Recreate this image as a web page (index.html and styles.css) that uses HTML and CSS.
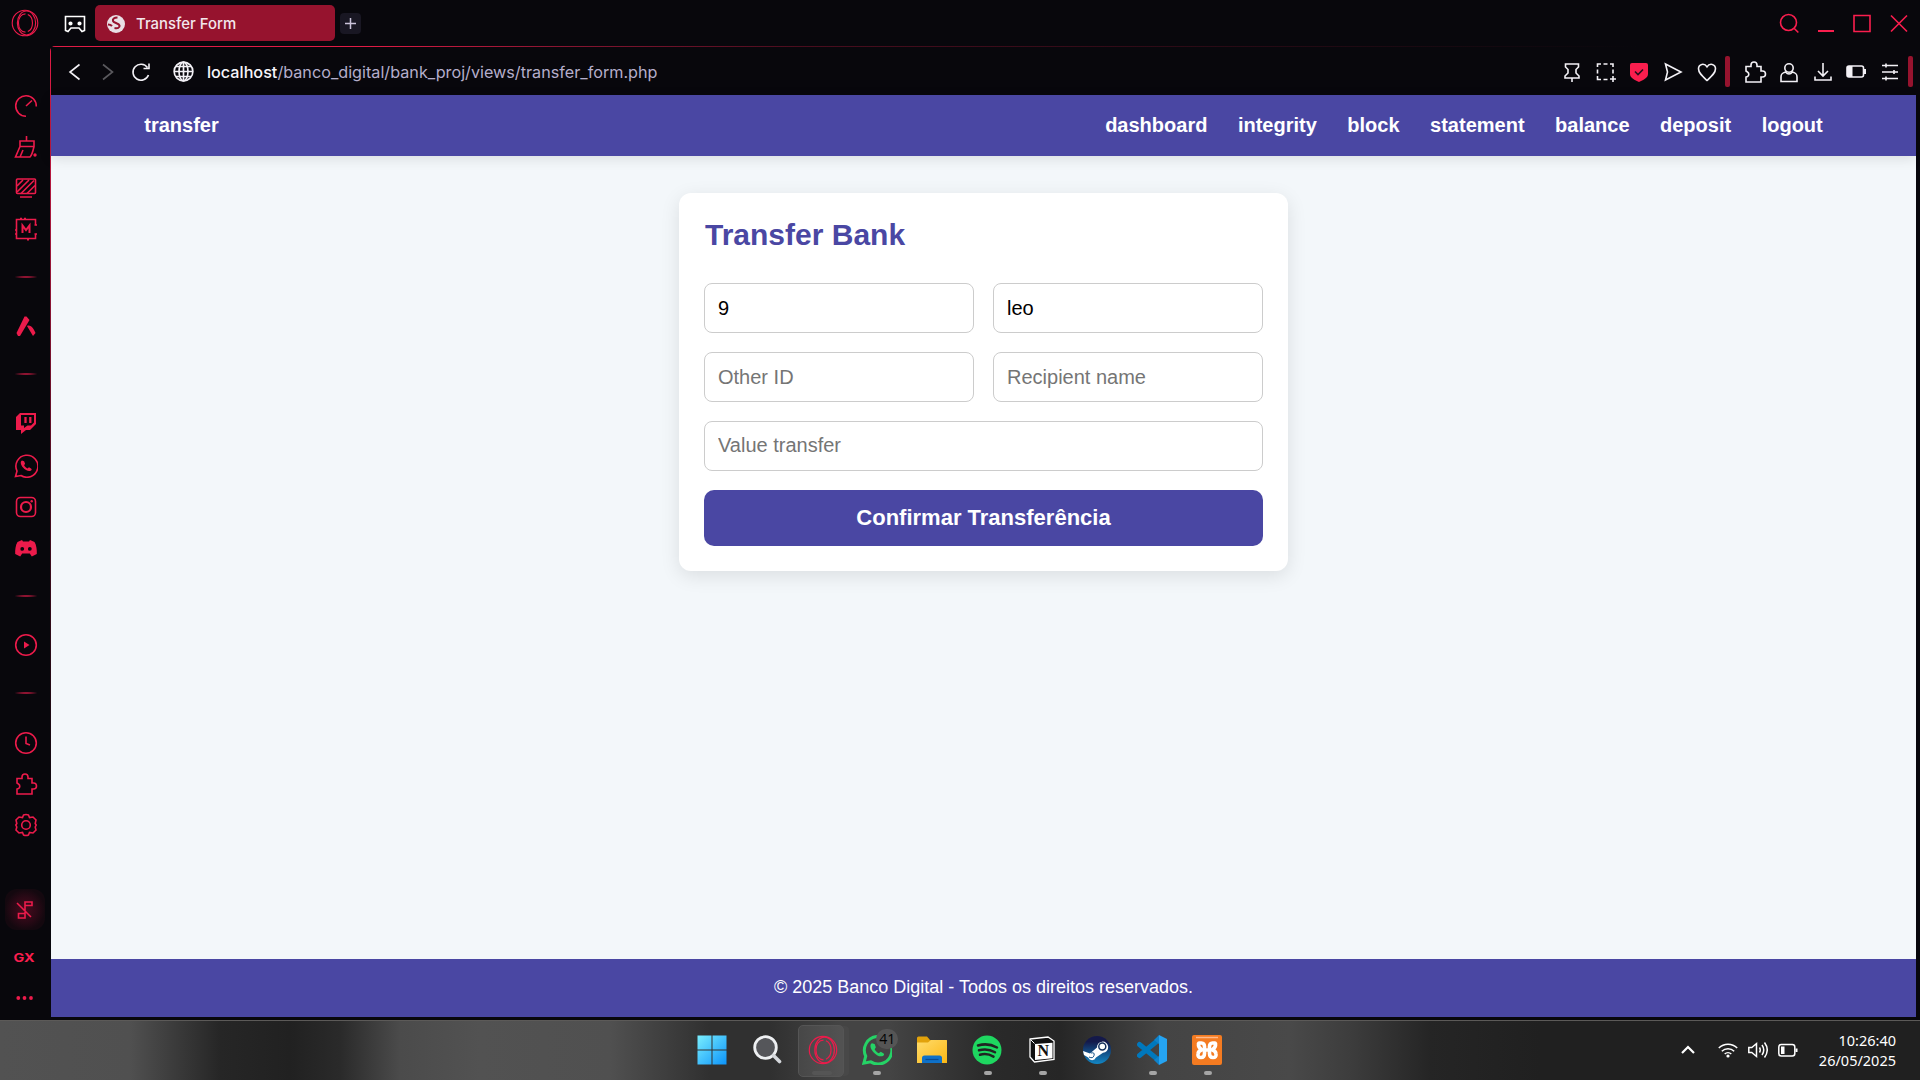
FILE: index.html
```html
<!DOCTYPE html>
<html lang="pt-BR">
<head>
<meta charset="utf-8">
<title>Transfer Form</title>
<link rel="stylesheet" href="styles.css">
</head>
<body>
<svg class="defs" width="0" height="0" aria-hidden="true">
  <defs>
    <symbol id="opera" viewBox="0 0 30 30"><circle cx="15" cy="15" r="13.7"/><ellipse cx="16.6" cy="15" rx="9.8" ry="12.8"/><path d="M15.500 5.200c-4.500 0-7.500 4-7.500 9.800s3 9.800 7.500 9.800M18 5.800c3.500 1.500 5 5 5 9.200s-1.500 7.700-5 9.200"/></symbol>
    <symbol id="puzzle" viewBox="0 0 24 24"><path d="M3 6.500h5V5a3 3 0 0 1 6 0v1.500h4v4.500h1.500a3 3 0 0 1 0 6H18V22H3v-5l1.500-.5a2.600 2.600 0 0 0 0-4.500L3 11z"/></symbol>
    <symbol id="wa" viewBox="0 0 24 24"><path d="M1.500 22.500 3 17A11 11 0 1 1 7 21.500z"/><path fill="currentColor" stroke="none" d="M8 6.500c-2 1-1.500 4 1 7s6 4.500 8 3c1-.8.8-1.500 0-2l-2-1.200-1.600 1.200c-1.600-.7-2.500-1.800-3.300-3.200l1-1.500-1-2.600z"/></symbol>
  </defs>
</svg>

<div class="window">
  <header class="tabstrip">
    <svg class="line brand" viewBox="0 0 30 30"><use href="#opera"/></svg>
    <svg class="gamepad" viewBox="0 0 22 18"><path d="M1.500 1.500h19v14l-2.500 1-3-3.500H7l-3 3.500-2.500-1z"/><circle cx="6.500" cy="8.500" r="1.300"/><circle cx="15.500" cy="8.500" r="1.300"/></svg>
    <div class="tab">
      <svg viewBox="0 0 20 20"><circle cx="10" cy="10" r="9" fill="#e9dfe5"/><path d="M11.500 3.500C8 3.500 6.500 5 7 7s6 2 6.500 4.500-2 3-5 2.500M2 10.500c1.500 0 3 .5 4 1.500" fill="none" stroke="#96132e" stroke-width="2.100"/></svg>
      <span>Transfer Form</span>
    </div>
    <div class="newtab"><svg viewBox="0 0 21 21"><path d="M10.500 5v11M5 10.500h11"/></svg></div>
    <div class="controls">
      <svg viewBox="0 0 24 24"><circle cx="11.500" cy="11.500" r="8"/><path d="m17.300 17.500 4 4"/></svg>
      <svg viewBox="0 0 24 24"><path d="M4 20h16" stroke-width="2"/></svg>
      <svg viewBox="0 0 24 24"><path d="M4 4.500h16v16H4z"/></svg>
      <svg viewBox="0 0 24 24"><path d="m4 4.500 16 16M20 4.500l-16 16"/></svg>
    </div>
  </header>

  <div class="body">
    <aside class="sidebar">
      <svg viewBox="0 0 24 24"><path d="M12 22.300A10.300 10.300 0 1 1 22.300 12.500M12 12l6-5.500"/></svg>
      <svg viewBox="0 0 24 24"><path d="M12.500 1v5M6 6h14v5.500H6zM6 11.500 1.500 22H16c2-2 3-6 4-10.500M9 15l-3 7"/><circle class="solid" cx="21" cy="20" r="1.700"/></svg>
      <svg viewBox="0 0 24 24"><rect x="2.500" y="3" width="19" height="14.500" rx="1"/><path d="M6 21h12M3 10l6-6M3 16l12-12M7 17.500 20 4.500M13 17.500l8-8"/></svg>
      <svg viewBox="0 0 24 24"><path d="M21.500 8V2.500h-19v19h19V17M6 1.500h2M10 1.500h2M1 13h2M1 17h2M13 22.700h2M20.500 8H23M20.500 17H23"/><path stroke-width="2" d="M8.500 16V8.500l3.500 4.500 3.500-4.500V16"/></svg>
      <i class="rule"></i>
      <svg viewBox="0 0 24 24"><path class="solid" d="m2.500 19 8-16.500h2L15.500 6l-9.500 16h-2zM13 12c4-2 7 3.500 8.500 7L19 22z"/></svg>
      <i class="rule"></i>
      <svg viewBox="0 0 24 24"><path class="solid" fill-rule="evenodd" d="M6 2h16v11l-6 6h-4l-5 4v-4H2V6zM7 4v10.500h3V17l3.500-2.500H17l3-3V4z"/><path stroke-width="2.300" d="M11.500 6v6M16.300 6v6"/></svg>
      <svg class="apart" viewBox="0 0 24 24"><use href="#wa"/></svg>
      <svg viewBox="0 0 24 24"><rect x="2.500" y="2.500" width="19" height="19" rx="4"/><circle cx="12" cy="12" r="5" stroke-width="2.200"/><circle class="solid" cx="17.700" cy="6.300" r="1.200"/></svg>
      <svg viewBox="0 0 24 24"><path class="solid" fill-rule="evenodd" d="M8 4 3.500 6C1.500 9 1 14 1.200 18l5 2.500 2-3h7.600l2 3 5-2.500c.2-4-.3-9-2.300-12L16 4l-1 1.500H9zM8.200 11a1.900 1.900 0 1 0 .1 3.800 1.900 1.900 0 0 0-.1-3.800zm7.600 0a1.900 1.900 0 1 0 .1 3.800 1.900 1.900 0 0 0-.1-3.800z"/></svg>
      <i class="rule"></i>
      <svg viewBox="0 0 24 24"><circle cx="12" cy="12" r="10.300"/><path class="solid" d="m10 8.500 5.500 3.500-5.500 3.500z"/></svg>
      <i class="rule"></i>
      <svg class="late" viewBox="0 0 24 24"><circle cx="12" cy="12" r="10.300"/><path d="M12 5.500v7l4 1.500"/></svg>
      <svg viewBox="0 0 24 24"><use href="#puzzle"/></svg>
      <svg viewBox="0 0 24 24"><path d="M9.500 2q2.500-1 5 0l1 2.500 3.500-.5 3 3-.8 3.500 1 1.500-1 2 .8 3-3 3-3.500-.5-1 2.500q-2.500 1-5 0l-1-2.500L5 20l-3-3 .8-3-1-2 1-1.500L2 7l3-3 3.500.5z"/><circle cx="12" cy="12" r="4.300"/></svg>
      <div class="glow"><svg viewBox="0 0 24 24"><path d="m4 5 14 14M12 10.500V20H5.500v-4.500H12M12 12V4h7v3.500h-7"/></svg></div>
      <span class="gx">GX</span>
      <svg class="dots" viewBox="0 0 24 24"><g class="solid"><circle cx="4.300" cy="12" r="1.900"/><circle cx="10.500" cy="12" r="1.900"/><circle cx="17" cy="12" r="1.900"/></g></svg>
    </aside>

    <main class="view">
      <div class="addressbar">
        <svg class="step" viewBox="0 0 24 24"><path d="M16.500 4.500 7 12l9.500 7.500"/></svg>
        <svg class="step off" viewBox="0 0 24 24"><path d="M7 4.500 16.500 12 7 19.500"/></svg>
        <svg class="step" viewBox="0 0 24 24"><path d="M19.500 15A8 8 0 1 1 18.500 7.500M20 3.500v5h-5.500"/></svg>
        <svg class="globe" viewBox="0 0 24 24"><circle cx="12" cy="12" r="9"/><ellipse cx="12" cy="12" rx="4.300" ry="9"/><path d="M12 3v18M3 12h18M4.500 7.200h15M4.500 16.800h15"/></svg>
        <div class="url"><b>localhost</b>/banco_digital/bank_proj/views/transfer_form.php</div>
        <div class="tools">
          <svg viewBox="0 0 24 24"><path d="M5.500 4h13v3L16 9.500V13l3 3v2h-14v-2l3-3V9.500L5.500 7zM12 18v4"/></svg>
          <svg viewBox="0 0 24 24"><path d="M3.500 7V4H7M9.500 4h4M16 4h3v3M19 9.500v4M3.500 9.500v4M3.500 16v3.500H7M9.500 19.500h4M19 16v6M16 19h6"/></svg>
          <svg viewBox="0 0 24 24"><path class="shield" d="M5 3h14a2 2 0 0 1 2 2v9c0 4-5 6-9 8-4-2-9-4-9-8V5a2 2 0 0 1 2-2z"/><path class="tick" d="m8 11.500 3 3 5-5"/></svg>
          <svg viewBox="0 0 24 24"><path d="m4.500 4 15.500 8-15.500 8 2-8z"/></svg>
          <svg viewBox="0 0 24 24"><path d="M12 20.500C7 16 3.500 13 3.500 8.800c0-5 6-6 8.500-2 2.500-4 8.500-3 8.500 2 0 4.200-3.500 7.200-8.500 11.700z"/></svg>
          <i class="grip"></i>
          <svg viewBox="0 0 24 24"><use href="#puzzle"/></svg>
          <svg viewBox="0 0 24 24"><circle cx="12" cy="8" r="4.200"/><path d="M8.500 12C5 13 4 14 4 17v4.500h16V17c0-3-1-4-4.500-5q-3.500 4-7 0z"/></svg>
          <svg viewBox="0 0 24 24"><path d="M12 3v13M7 11l5 5 5-5M4 16.500V20h16v-3.500"/></svg>
          <svg viewBox="0 0 24 24"><rect x="3" y="6" width="16.500" height="11" rx="2"/><path fill="#f3f1f6" stroke="none" d="M3 6h5.500v11H3zM20 9h2v5h-2z"/></svg>
          <svg viewBox="0 0 24 24"><path d="M4 5.500h16M4 12h16M4 18.500h16M8 3.500v4M16 10v4M8 16.500v4"/></svg>
          <i class="grip end"></i>
        </div>
      </div>

      <div class="page">
        <nav class="navbar">
          <a>transfer</a>
          <ul><li>dashboard</li><li>integrity</li><li>block</li><li>statement</li><li>balance</li><li>deposit</li><li>logout</li></ul>
        </nav>
        <section class="content">
          <form class="card">
            <h2>Transfer Bank</h2>
            <input type="text" value="9">
            <input type="text" value="leo">
            <input type="text" placeholder="Other ID">
            <input type="text" placeholder="Recipient name">
            <input class="wide amount" type="text" placeholder="Value transfer">
            <button class="wide" type="button">Confirmar Transferência</button>
          </form>
        </section>
        <footer class="footer">© 2025 Banco Digital - Todos os direitos reservados.</footer>
      </div>
    </main>
  </div>
</div>

<div class="taskbar">
  <div class="dock">
    <div class="app"><svg viewBox="0 0 30 30"><defs><linearGradient id="win" gradientUnits="userSpaceOnUse" x1="0" y1="0" x2="30" y2="30"><stop offset="0" stop-color="#7cf0fe"/><stop offset="1" stop-color="#0a92fa"/></linearGradient></defs><path fill="url(#win)" d="M.5.500h14v14H.5zM15.500.500h14v14h-14zM.5 15.500h14v14H.5zM15.500 15.500h14v14h-14z"/></svg></div>
    <div class="app"><svg viewBox="0 0 30 30"><circle cx="13.500" cy="12.500" r="10.800" fill="#55565a" stroke="#eef0f2" stroke-width="2.800"/><path d="m21.500 20.500 6 6" stroke="#d5d8dc" stroke-width="3.600" stroke-linecap="round"/></svg></div>
    <div class="app active"><svg class="line" viewBox="0 0 30 30"><use href="#opera"/></svg></div>
    <div class="app running"><svg class="whats" viewBox="0 0 24 24"><use href="#wa"/></svg><span class="badge">41</span></div>
    <div class="app"><svg viewBox="0 0 30 30"><defs><linearGradient id="fold" x2="1" y2="1"><stop offset="0" stop-color="#ffdc6c"/><stop offset="1" stop-color="#fbb714"/></linearGradient></defs><path fill="#e2a20b" d="M0 3q0-1.500 1.500-1.500H10L13 5h16v9H0z"/><path fill="url(#fold)" d="M0 7.500h11l3-2.500h15.500q.5 0 .5.500V28H0z"/><path fill="#0f71c8" d="M5 28v-5q0-2.500 2.500-2.500h15Q25 20.500 25 23v5z"/><path stroke="#084b94" stroke-width="1.200" d="M8.500 24.500h13"/></svg></div>
    <div class="app running"><svg viewBox="0 0 30 30"><circle cx="15" cy="15" r="14.500" fill="#1ed760"/><path d="M6 10.500q10-3 19 2M7 15.300q8.500-2.500 16 2M8 19.800q7-2 13.500 1.800" fill="none" stroke="#202422" stroke-width="2.500" stroke-linecap="round"/></svg></div>
    <div class="app running"><svg viewBox="0 0 30 30"><path fill="#111" stroke="#fff" stroke-width="1.300" d="m3 4 18-2 6 4v18.500L7.500 27 3 22z"/><path fill="#fff" d="m8 9 17.500-1.300v15.500L8 25z"/><path fill="none" stroke="#fff" d="m3.500 4.500 4 4"/></svg><b class="n">N</b></div>
    <div class="app"><svg viewBox="0 0 30 30"><defs><linearGradient id="st" x2="0" y2="1"><stop offset=".2" stop-color="#14194a"/><stop offset="1" stop-color="#1287c5"/></linearGradient></defs><circle cx="15" cy="15" r="14" fill="url(#st)"/><path fill="#fff" d="m1 16 7 2.600 7-6a5.600 5.600 0 1 1 6 5.200l-7 4.700a4.200 4.200 0 0 1-7.800 0L2 20z"/><circle cx="20.300" cy="11.500" r="3.500" fill="none" stroke="#15305c" stroke-width="1.500"/><path d="M7 22q4 2 5-1.500T9 18" fill="none" stroke="#145286"/></svg></div>
    <div class="app running"><svg viewBox="0 0 30 30"><path d="M2.500 9.500 22 25.500M2.500 20.500 22 4.500" stroke="#0078bd" stroke-width="5" stroke-linecap="round"/><path fill="#25a4f2" d="m22 0 8 4v22l-8 4z"/><path fill="#0f83cc" d="m22 0v9l-5-4zM22 30v-9l-5 4z"/></svg></div>
    <div class="app running"><svg viewBox="0 0 30 30"><rect width="30" height="30" rx="2" fill="#f47b21"/><path d="M4 2.500h22" stroke="#ffb98a" stroke-width="1.500"/><path fill="none" stroke="#fff" stroke-width="3.600" stroke-linejoin="round" stroke-linecap="round" d="M12.500 15h5M7 8h2.500q3 0 3 3.500v7q0 4-3.500 4t-3-3.500q.3-3 3.500-4M6.500 8.500q-.5 4 3 6M23 8h-2.500q-3 0-3 3.500v7q0 4 3.500 4t3-3.500q-.3-3-3.500-4M23.500 8.500q.5 4-3 6"/></svg></div>
  </div>
  <div class="tray">
    <svg class="chev" viewBox="0 0 20 20"><path d="m4 13 6-6 6 6" stroke-width="2.200"/></svg>
    <svg viewBox="0 0 20 20"><path d="M.8 8a13 13 0 0 1 18.400 0M3.800 11.200a8.800 8.800 0 0 1 12.400 0M6.700 14a4.800 4.800 0 0 1 6.600 0"/><circle cx="10" cy="16" r="1.600" fill="#fff" stroke="none"/></svg>
    <svg viewBox="0 0 20 20"><path d="M.8 7.500h3L8.500 3.500v13L3.800 12.500h-3zM11.500 7.500q1.500 2.500 0 5M14 5q3.500 5 0 10M16.500 2.500q5.500 7.500 0 15"/></svg>
    <svg viewBox="0 0 20 20"><rect x=".8" y="4.500" width="16" height="11.500" rx="2.500"/><path fill="#fff" stroke="none" d="M3 6.500h3.500v7.500H3zM17.500 8.500h2v3.500h-2z"/></svg>
    <div class="clock"><span>10:26:40</span><span>26/05/2025</span></div>
  </div>
</div>
</body>
</html>
```
FILE: styles.css
```css
* { box-sizing: border-box; }

body {
  margin: 0;
  width: 1920px;
  height: 1080px;
  overflow: hidden;
  display: flex;
  flex-direction: column;
  background: #08070c;
  font-family: "Liberation Sans", Arial, sans-serif;
}

svg { display: block; flex: none; }
.defs { position: absolute; }

.window { height: 1020px; display: flex; flex-direction: column; }

/* Tab strip */
.tabstrip { height: 46px; display: flex; align-items: center; padding-left: 11px; }
.line { fill: none; stroke: #ec1b4b; stroke-width: 1.2; }
.brand { width: 28px; height: 28px; }
.gamepad { width: 22px; height: 18px; margin: 1px 9px 0 25px; fill: none; stroke: #fff; stroke-width: 1.6; }
.gamepad circle { fill: #fff; }
.tab {
  width: 240px;
  height: 36px;
  display: flex;
  align-items: center;
  gap: 10px;
  padding: 1px 11px 0;
  border-radius: 5px;
  background: #96132e;
  color: #f3e7ec;
  font: 450 14.9px Inter, sans-serif;
}
.tab svg { width: 20px; height: 20px; }
.newtab { width: 21px; height: 21px; margin-left: 5px; border-radius: 4px; background: #191723; }
.newtab svg { width: 21px; height: 21px; stroke: #cbc3da; stroke-width: 1.5; }
.controls { display: flex; margin-left: auto; padding-right: 3px; }
.controls svg { width: 24px; height: 24px; margin: 0 6.3px; fill: none; stroke: #fa1e4e; stroke-width: 1.6; }

.body { height: 974px; display: flex; }

/* Sidebar */
.sidebar {
  width: 50px;
  display: flex;
  flex-direction: column;
  align-items: center;
  gap: 17px;
  padding: 48px 0 0 2px;
  color: #ec1b4b;
}
.sidebar svg { width: 24px; height: 24px; fill: none; stroke: currentColor; stroke-width: 1.6; }
.sidebar .solid { fill: currentColor; stroke: none; }
.rule { width: 26px; height: 2px; flex: none; margin: 18px 0 19px; background: radial-gradient(closest-side, #e01b48 20%, transparent); }
.sidebar .apart { margin-top: 2px; }
.sidebar .late { margin-top: 1px; }
.glow {
  display: grid;
  place-items: center;
  flex: none;
  width: 40px;
  height: 41px;
  margin: 35px 3px 0 0;
  border-radius: 12px;
  background: radial-gradient(closest-side, #470b1d, #2b0916 60%, #14080f);
}
.gx { width: 24px; height: 14px; margin: 4px 4px 0 0; color: #fa1e4e; font: 700 11.5px/14px Inter, sans-serif; text-align: center; transform: scaleX(1.25); }
.sidebar .dots { margin-top: 4px; }

/* Browser view */
.view {
  flex: 1;
  display: flex;
  flex-direction: column;
  padding: 1px 4px 3px 1px;
  border-top-left-radius: 5px;
  background:
    linear-gradient(90deg, #e01b45, #e01b45 17%, #8a1532 27%, #4a0d1e 40%, #08070c 85%) 0 0 / 100% 1px no-repeat,
    linear-gradient(#e01b45, #a0173a 20%, #4d0d20 45%, #08070c 80%) 0 0 / 1px 100% no-repeat;
}
.addressbar { height: 48px; display: flex; align-items: center; padding: 1px 0 0 12px; }
.addressbar svg { width: 24px; height: 24px; fill: none; stroke: #f3f1f6; stroke-width: 1.6; }
.step { margin-right: 9px; }
.addressbar .off { opacity: .35; }
.addressbar .globe { width: 25px; height: 25px; margin-left: 9px; }
.url { margin: 1px 0 0 11px; color: #b5aecb; font: 400 16.2px Inter, sans-serif; }
.url b { color: #f7f5fa; font-weight: 500; }
.tools { display: flex; align-items: center; margin-left: auto; }
.tools svg { margin: 0 4.85px; }
.tools .shield { fill: #fa1e4e; stroke: none; }
.tools .tick { stroke: #24101c; }
.grip { width: 5px; height: 31px; margin: 0 8.5px 0 1.5px; border-radius: 2px; background: #96132e; }
.grip.end { margin: 0 3px 0 1px; }

/* Bank page */
.page { flex: 1; display: flex; flex-direction: column; background: #f3f7fa; }
.navbar {
  height: 61px;
  display: flex;
  align-items: center;
  justify-content: space-between;
  padding: 0 5%;
  background: #4a47a3;
  box-shadow: 0 3px 12px rgba(0, 0, 0, .1);
  color: #fff;
  font-size: 20px;
  font-weight: bold;
}
.navbar ul { display: flex; gap: 30.5px; margin: 0; padding: 0; list-style: none; }
.content { flex: 1; display: flex; justify-content: center; align-items: flex-start; padding-top: 37px; }
.card {
  width: 609px;
  height: 378px;
  display: grid;
  grid-template-columns: 270px 270px;
  grid-template-rows: 71px 50px 50px 50px 56px;
  column-gap: 19px;
  row-gap: 19px;
  padding: 0 25px;
  border-radius: 12px;
  background: #fff;
  box-shadow: 0 5px 19px rgba(0, 0, 0, .1);
}
.card h2 { grid-column: 1 / -1; margin: 25px 0 0 1px; color: #4a47a3; font-size: 30px; line-height: 34px; }
.card input {
  min-width: 0;
  padding: 0 13px;
  border: 1px solid #ccc;
  border-radius: 8px;
  background: #fff;
  color: #000;
  font: 20px "Liberation Sans", Arial, sans-serif;
}
.card input::placeholder { color: #757575; }
.card .amount { padding-bottom: 2px; }
.wide { grid-column: 1 / -1; }
.card button {
  padding: 0;
  border: 0;
  border-radius: 10px;
  background: #4a47a3;
  color: #fff;
  font: bold 22px "Liberation Sans", Arial, sans-serif;
}
.footer {
  height: 58px;
  padding-bottom: 1px;
  display: flex;
  align-items: center;
  justify-content: center;
  background: #4a47a3;
  color: #fff;
  font-size: 18px;
}

/* Taskbar */
.taskbar {
  height: 60px;
  display: grid;
  grid-template-columns: 1fr auto 1fr;
  align-items: center;
  border-top: 1px solid #5c5a58;
  background: linear-gradient(90deg, #525252 0, #505050 130px, #262626 220px, #212121 290px, #2a2a2a 340px, #4b4b4b 400px, #525252 480px, #505050 610px, #303030 710px, #303030 770px, #444 840px, #444 890px, #2a2a2a 990px, #262626 1060px, #444 1160px, #494949 1290px, #3d3d3d 1350px, #252525 1430px, #202020 1540px, #202020);
}
.dock { grid-column: 2; display: flex; margin-left: -1px; }
.app { position: relative; width: 55.1px; height: 59px; padding-bottom: 1px; display: grid; place-items: center; }
.app svg { width: 30px; height: 30px; }
.running::after, .active::after {
  content: "";
  position: absolute;
  left: 24px;
  bottom: 5px;
  width: 8px;
  height: 4px;
  border-radius: 2px;
  background: #a5a5a5;
}
.active::before {
  content: "";
  position: absolute;
  left: 4px;
  top: 4px;
  width: 44px;
  height: 50px;
  border: 1px solid #555;
  border-radius: 5px;
  background: rgba(255, 255, 255, .08);
  box-shadow: 6px 0 0 -1px #484848;
}
.active svg { position: relative; left: 1px; }
.active::after { left: 18px; width: 20px; background: #555; }
.app .whats { fill: none; color: #25d366; stroke: #25d366; stroke-width: 2.4; }
.badge {
  position: absolute;
  left: 27px;
  top: 8px;
  width: 22px;
  height: 20px;
  border-radius: 10px;
  background: #555;
  color: #000;
  font: 14px/20px "Open Sans", sans-serif;
  text-align: center;
}
.n { position: absolute; left: 23px; top: 20px; color: #111; font: bold 16px/20px "Liberation Serif", serif; }
.tray { grid-column: 3; justify-self: end; display: flex; align-items: center; padding: 0 24px 2px 0; }
.tray svg { width: 20px; height: 20px; margin-right: 10px; fill: none; stroke: #fff; stroke-width: 1.5; }
.tray .chev { margin-right: 20px; }
.clock { width: 88px; display: flex; flex-direction: column; align-items: flex-end; color: #fff; font: 14.5px/20px "Noto Sans", sans-serif; }
```
